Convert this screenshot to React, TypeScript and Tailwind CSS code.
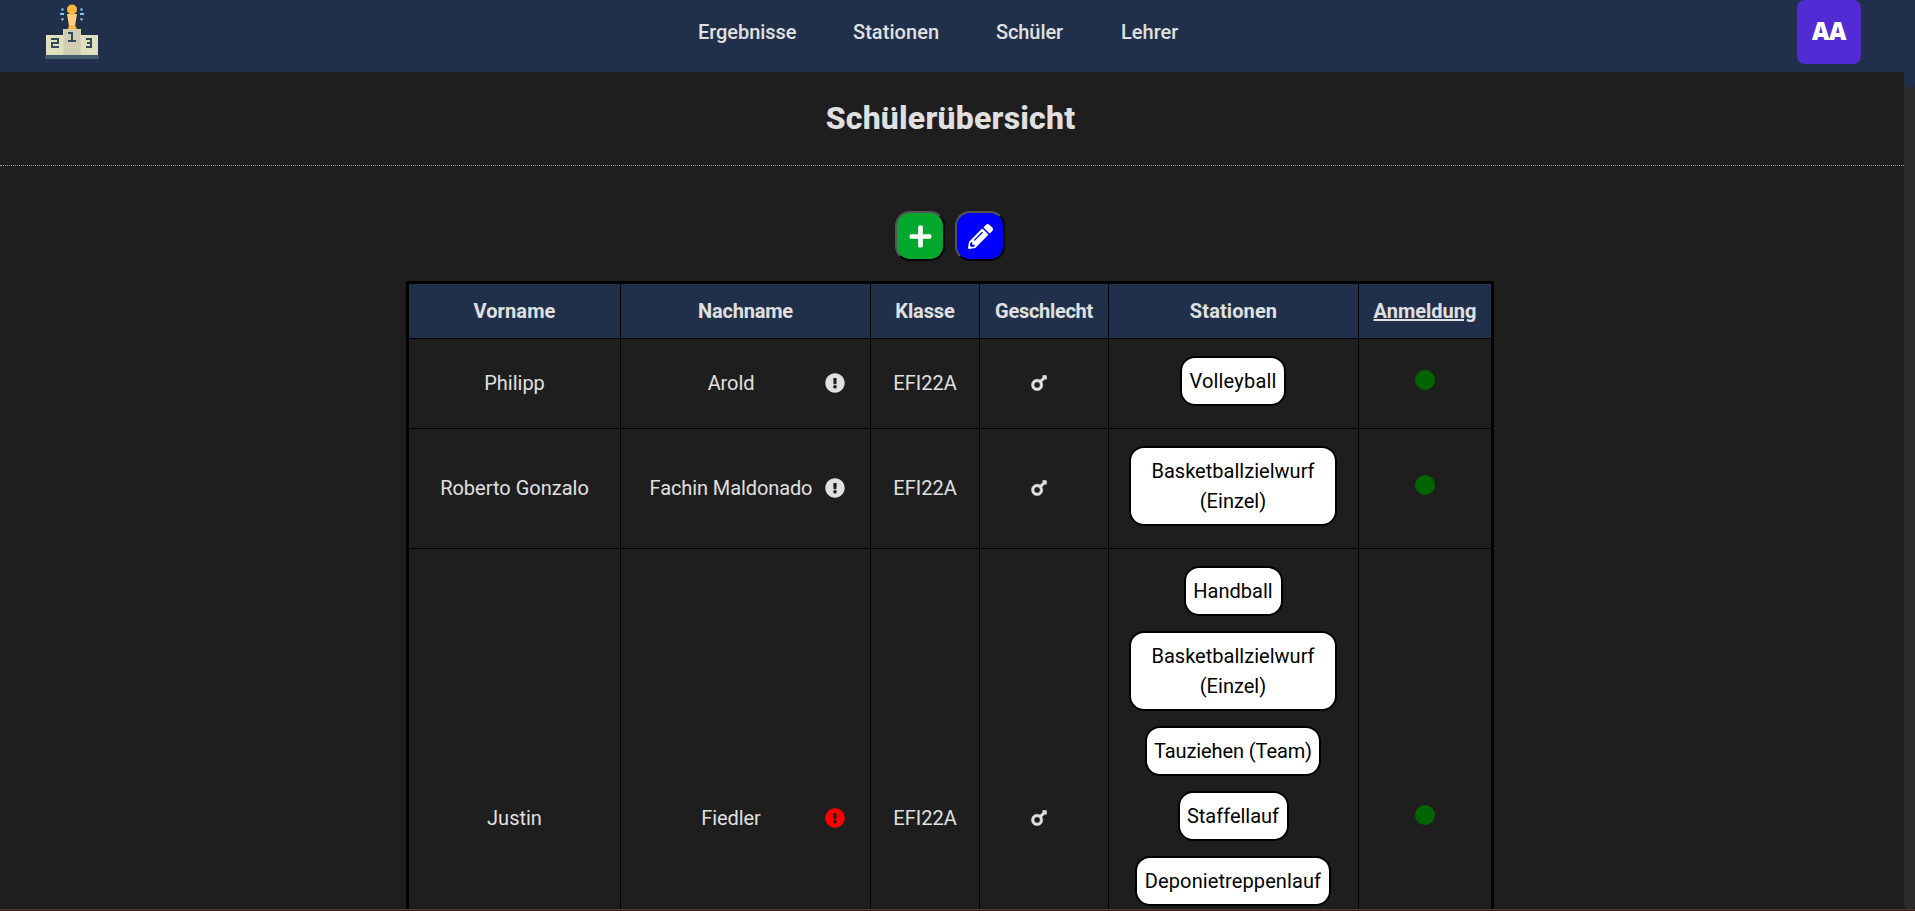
import { FaExclamationCircle, FaMars, FaPencilAlt, FaPlus } from "react-icons/fa";

type Student = {
  first: string;
  last: string;
  alert: string;
  height: string;
  stations: { lines: string[]; width: string; track: string }[];
};

const basketball = {
  lines: ["Basketballzielwurf", "(Einzel)"],
  width: "w-[208px]",
  track: "tracking-[0.02px]",
};

const students: Student[] = [
  {
    first: "Philipp",
    last: "Arold",
    alert: "text-[#e0e0e0]",
    height: "h-[90px]",
    stations: [{ lines: ["Volleyball"], width: "w-[106px]", track: "tracking-[0.2px]" }],
  },
  {
    first: "Roberto Gonzalo",
    last: "Fachin Maldonado",
    alert: "text-[#e0e0e0]",
    height: "h-[120px]",
    stations: [basketball],
  },
  {
    first: "Justin",
    last: "Fiedler",
    alert: "text-[#ff0000]",
    height: "h-[540px]",
    stations: [
      { lines: ["Handball"], width: "w-[99px]", track: "tracking-normal" },
      basketball,
      { lines: ["Tauziehen (Team)"], width: "w-[176px]", track: "tracking-[-0.1px]" },
      { lines: ["Staffellauf"], width: "w-[111px]", track: "tracking-normal" },
      { lines: ["Deponietreppenlauf"], width: "w-[196px]", track: "tracking-[0.1px]" },
    ],
  },
];

const columns = "grid grid-cols-[212px_250px_109px_129px_250px_132px]";
const cell = "flex items-center justify-center border-b border-black";

function Logo() {
  return (
    <svg width="54" height="55" viewBox="0 0 54 55">
      <path d="M1 31h17v-6h18v6h17v21H1z" fill="#e0e0bd" />
      <path d="M18.500 25h17v27h-17z" fill="#cfceb2" />
      <path d="M0 51h54v4H0z" fill="#40596b" />
      <path d="M22 10h10l-2 12h-6z" fill="#ffd07a" />
      <path d="M24 21h6l2 4h-9z" fill="#fbb540" />
      <circle cx="27" cy="5.500" r="5" fill="#fbb540" />
      <path d="M15 10h4M35 10h4M16.500 5l2 1M37.500 5l-2 1M16.500 16l2-1.500M37.500 16l-2-1.500" stroke="#7cc8e8" strokeWidth="2" />
      <path d="M6 35h7v4H7v4h7M41 35h5v8h-5M42 39h4M23 29h4v8M23 37h8" stroke="#35495c" strokeWidth="2" fill="none" />
    </svg>
  );
}

export default function App() {
  return (
    <div className="flex h-[911px] w-[1915px] flex-col overflow-hidden bg-[#1e1e1e] font-['Roboto',sans-serif] text-xl text-[#e0e0e0]">
      <header className="flex h-[72px] shrink-0 items-start bg-[#21304a]">
        <div className="w-[698px] pt-1 pl-[45px]">
          <Logo />
        </div>
        <nav className="flex w-[1099px] pt-[17px] leading-[30px] font-medium">
          <a className="w-[155px] tracking-[-0.05px]">Ergebnisse</a>
          <a className="w-[143px] tracking-[0.05px]">Stationen</a>
          <a className="w-[125px] tracking-[-0.1px]">Schüler</a>
          <a>Lehrer</a>
        </nav>
        <div className="flex size-16 items-center justify-center rounded-lg bg-[#522bd4] pb-0.5 font-['Open_Sans',sans-serif] text-2xl font-extrabold tracking-[-0.5px] text-white">
          AA
        </div>
      </header>
      <div className="flex h-[837px] shrink-0">
        <main className="flex w-[1904px] flex-col items-center overflow-hidden">
          <h1 className="h-[93px] shrink-0 pt-[22px] pr-[3px] text-[32px] leading-[48px] font-extrabold tracking-[0.2px]">
            Schülerübersicht
          </h1>
          <div className="w-full shrink-0 border-t border-dotted border-[#9a9a9a]" />
          <div className="mt-[45px] mb-5 flex shrink-0 gap-2.5 pr-1">
            <button className="flex size-[50px] items-center justify-center rounded-[15px] border-2 border-black bg-[#00a82d] text-white [border-style:outset]">
              <FaPlus size={25} />
            </button>
            <button className="flex size-[50px] items-center justify-center rounded-[15px] border-2 border-black bg-[#0000ff] text-white [border-style:outset]">
              <FaPencilAlt size={25} />
            </button>
          </div>
          <section className="mr-1 w-[1088px] shrink-0 border-[3px] border-black">
            <div className={`${columns} h-[55px] bg-[#21304a] font-bold`}>
              <div className={`${cell} border-r tracking-[0.1px]`}>Vorname</div>
              <div className={`${cell} border-r tracking-[-0.2px]`}>Nachname</div>
              <div className={`${cell} border-r tracking-[-0.1px]`}>Klasse</div>
              <div className={`${cell} border-r tracking-[-0.3px]`}>Geschlecht</div>
              <div className={`${cell} border-r tracking-[0.1px]`}>Stationen</div>
              <div className={`${cell} underline`}>Anmeldung</div>
            </div>
            {students.map((s) => (
              <div key={s.first} className={`${columns} ${s.height}`}>
                <div className={`${cell} border-r pb-0.5`}>{s.first}</div>
                <div className={`${cell} border-r pr-[25px] pb-0.5 pl-[28px]`}>
                  <span className="flex-1 text-center tracking-[-0.1px] whitespace-nowrap">{s.last}</span>
                  <FaExclamationCircle size={20} className={`ml-3 shrink-0 ${s.alert}`} />
                </div>
                <div className={`${cell} border-r pb-0.5`}>EFI22A</div>
                <div className={`${cell} border-r pr-[11px] pb-0.5`}>
                  <FaMars size={20} stroke="currentColor" strokeWidth={14} />
                </div>
                <div className="flex flex-col items-center gap-[15px] border-r border-b border-black pt-[17px] pr-px">
                  {s.stations.map((st) => (
                    <div
                      key={st.lines[0]}
                      className={`flex shrink-0 flex-col items-center rounded-[15px] border-2 border-black bg-white py-2 leading-[30px] whitespace-nowrap text-black ${st.width} ${st.track}`}
                    >
                      {st.lines.map((l) => (
                        <span key={l}>{l}</span>
                      ))}
                    </div>
                  ))}
                </div>
                <div className={`${cell} pb-[7px]`}>
                  <span className="size-5 rounded-full bg-[#006400]" />
                </div>
              </div>
            ))}
          </section>
        </main>
        <aside className="w-[11px] rounded-b-md bg-[#2b2b2b]">
          <div className="h-4 rounded-b-md bg-[#21304a]" />
        </aside>
      </div>
      <footer className="h-0.5 shrink-0 border-t border-[#4a3d38] bg-[#4a1519]" />
    </div>
  );
}
